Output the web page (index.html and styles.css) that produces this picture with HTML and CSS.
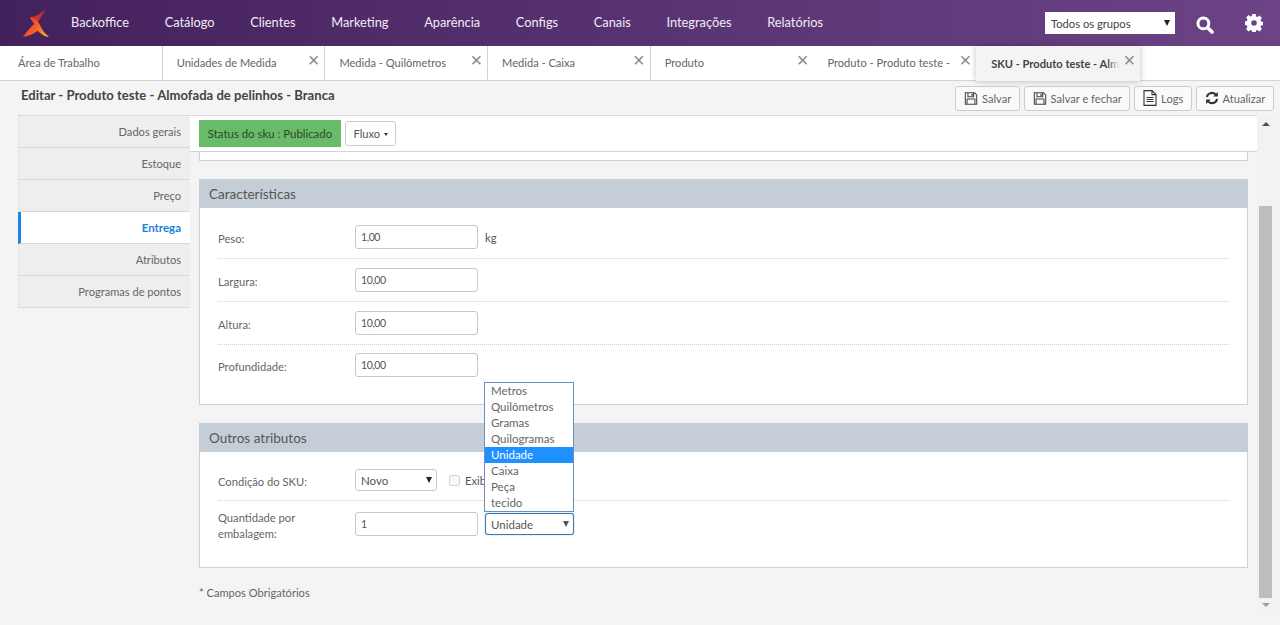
FILE: index.html
```html
<!DOCTYPE html>
<html lang="pt-BR">
<head>
  <meta charset="UTF-8">
  <meta name="viewport" content="width=device-width, initial-scale=1.0">
  <title>Editar SKU</title>
  <link rel="stylesheet" href="styles.css">
</head>
<body>
  <header class="topbar">
    <svg class="logo" width="36" height="34" viewBox="0 0 36 34">
      <defs>
        <linearGradient id="logoGrad" x1="0" y1="0.5" x2="1" y2="1">
          <stop offset="0" stop-color="#ee3a24"/>
          <stop offset="0.55" stop-color="#f7702a"/>
          <stop offset="1" stop-color="#f8c23c"/>
        </linearGradient>
        <linearGradient id="logoTop" x1="0" y1="1" x2="1" y2="0">
          <stop offset="0" stop-color="#e8342a"/>
          <stop offset="1" stop-color="#b8263a"/>
        </linearGradient>
      </defs>
      <path d="M28 2 C25 8 22 13 19 17 L14 15 L12 11.300 C18 11 24 7 28 2 Z" fill="url(#logoTop)"/>
      <path d="M12 11.300 C17 13 20 15 22 19 C24 24 27 28 31 30.700 C27 31 23 28 19.700 24.700 C15 28 10 30.500 5 31 C8 26 12 22 16 18 Z" fill="url(#logoGrad)"/>
    </svg>
    <nav class="menu">
      <a>Backoffice</a>
      <a>Catálogo</a>
      <a>Clientes</a>
      <a>Marketing</a>
      <a>Aparência</a>
      <a>Configs</a>
      <a>Canais</a>
      <a>Integrações</a>
      <a>Relatórios</a>
    </nav>
    <div class="group-select">
      <select>
        <option>Todos os grupos</option>
      </select>
    </div>
    <svg class="top-icon search" width="18" height="18" viewBox="0 0 18 18">
      <circle cx="7.400" cy="7.400" r="5.400" fill="none" stroke="#fff" stroke-width="3"/>
      <path d="M11.500 11.500 L16 16" stroke="#fff" stroke-width="3.600" stroke-linecap="round"/>
    </svg>
    <svg class="top-icon gear" width="18" height="18" viewBox="0 0 18 18">
      <path fill="#fff" fill-rule="evenodd" d="M7.300 0h3.400l.4 2.400 1.400.6 2-1.400 2.400 2.400-1.400 2 .6 1.400 2.400.4v3.400l-2.400.4-.6 1.400 1.400 2-2.400 2.400-2-1.400-1.400.6-.4 2.400H7.300l-.4-2.400-1.400-.6-2 1.400-2.400-2.400 1.400-2-.6-1.400L-.5 10.700V7.300l2.400-.4.6-1.400-1.400-2L3.500 1.100l2 1.400 1.400-.6zM9 6.200a2.800 2.800 0 1 0 0 5.600 2.800 2.800 0 0 0 0-5.600z"/>
    </svg>
  </header>

  <div class="tabs">
    <div class="tab tab-first"><span class="tab-text">Área de Trabalho</span></div>
    <div class="tab"><span class="tab-text">Unidades de Medida</span><span class="tab-close">×</span></div>
    <div class="tab"><span class="tab-text">Medida - Quilômetros</span><span class="tab-close">×</span></div>
    <div class="tab"><span class="tab-text">Medida - Caixa</span><span class="tab-close">×</span></div>
    <div class="tab tab-plain"><span class="tab-text">Produto</span><span class="tab-close">×</span></div>
    <div class="tab tab-plain"><span class="tab-text">Produto - Produto teste -</span><span class="tab-close">×</span></div>
    <div class="tab tab-active"><span class="tab-text">SKU - Produto teste - Alm</span><span class="tab-close">×</span></div>
  </div>

  <div class="title-row">
    <h1>Editar - Produto teste - Almofada de pelinhos - Branca</h1>
    <div class="actions">
      <button class="btn">
        <svg width="14" height="15" viewBox="0 0 16 16"><path fill="none" stroke="#444" stroke-width="1.200" d="M1.500 1.500h10.500l2.500 2.500v10.500h-13z M4.500 1.500v4.500h6.500v-4.500 M3.500 14.500v-6h9v6"/><path fill="#444" d="M8.500 2.500h1.500v2.500h-1.500z"/></svg>
        Salvar
      </button>
      <button class="btn">
        <svg width="14" height="15" viewBox="0 0 16 16"><path fill="none" stroke="#444" stroke-width="1.200" d="M1.500 1.500h10.500l2.500 2.500v10.500h-13z M4.500 1.500v4.500h6.500v-4.500 M3.500 14.500v-6h9v6"/><path fill="#444" d="M8.500 2.500h1.500v2.500h-1.500z"/></svg>
        Salvar e fechar
      </button>
      <button class="btn">
        <svg width="14" height="16" viewBox="0 0 14 16"><path fill="none" stroke="#333" stroke-width="1.100" d="M1 .6h8l4 4v10.800h-12z M9 .6v4h4"/><path stroke="#333" stroke-width="1.100" d="M3.500 7.500h7M3.500 9.500h7M3.500 11.500h7"/></svg>
        Logs
      </button>
      <button class="btn">
        <svg width="14" height="14" viewBox="0 0 15 15"><path fill="none" stroke="#333" stroke-width="2.200" d="M2 6.500A5.600 5.600 0 0 1 12 4.300M13 8.500A5.600 5.600 0 0 1 3 10.700"/><path fill="#333" d="M13.800 1v5h-5zM1.200 14v-5h5z"/></svg>
        Atualizar
      </button>
    </div>
  </div>

  <div class="workspace">
    <aside class="side">
      <a class="side-item">Dados gerais</a>
      <a class="side-item">Estoque</a>
      <a class="side-item">Preço</a>
      <a class="side-item side-active">Entrega</a>
      <a class="side-item">Atributos</a>
      <a class="side-item">Programas de pontos</a>
    </aside>

    <main class="content">
      <div class="status-bar">
        <span class="status">Status do sku : Publicado</span>
        <button class="flow">Fluxo <i class="caret"></i></button>
      </div>

      <div class="scroll-body">
        <div class="stub"></div>

        <section class="panel">
          <h2>Características</h2>
          <div class="panel-body">
            <div class="row">
              <label>Peso:</label>
              <input class="field" value="1,00">
              <span class="unit">kg</span>
            </div>
            <div class="row">
              <label>Largura:</label>
              <input class="field" value="10,00">
            </div>
            <div class="row">
              <label>Altura:</label>
              <input class="field" value="10,00">
            </div>
            <div class="row row-last">
              <label>Profundidade:</label>
              <input class="field" value="10,00">
            </div>
          </div>
        </section>

        <section class="panel panel-other">
          <h2>Outros atributos</h2>
          <div class="panel-body">
            <div class="row row-cond">
              <label>Condição do SKU:</label>
              <div class="select-wrap select-novo">
                <select><option>Novo</option></select>
              </div>
              <input class="check" type="checkbox" disabled>
              <span class="check-label">Exib</span>
            </div>
            <div class="row row-last row-qty">
              <label>Quantidade por<br>embalagem:</label>
              <input class="field" value="1">
              <div class="select-wrap select-unit">
                <select><option>Unidade</option></select>
                <ul class="listbox">
                  <li>Metros</li>
                  <li>Quilômetros</li>
                  <li>Gramas</li>
                  <li>Quilogramas</li>
                  <li class="selected">Unidade</li>
                  <li>Caixa</li>
                  <li>Peça</li>
                  <li>tecido</li>
                </ul>
              </div>
            </div>
          </div>
        </section>

        <p class="note">* Campos Obrigatórios</p>
      </div>
    </main>

    <div class="scrollbar">
      <i class="arrow-up"></i>
      <div class="thumb"></div>
      <i class="arrow-down"></i>
    </div>
  </div>
</body>
</html>
```

FILE: styles.css
```css
* {
  box-sizing: border-box;
}

html, body {
  height: 625px;
  overflow: hidden;
}

body {
  margin: 0;
  background-color: #f4f4f4;
  color: #555;
  font-family: "Lato", "Open Sans", sans-serif;
  font-size: 12px;
}

/* top bar */
.topbar {
  display: flex;
  align-items: center;
  height: 46px;
  padding-left: 18px;
  background: linear-gradient(to right, #43215c, #6c4486);
}

.logo {
  flex: none;
}

.menu {
  display: flex;
  flex: 1;
  gap: 35.7px;
  margin: 0 0 2px 17px;
}

.menu a {
  color: #f1ecf5;
  font-size: 12.8px;
}

.group-select {
  position: relative;
  width: 130px;
  height: 22px;
  margin-right: 21px;
  background-color: #fff;
}

.group-select select {
  width: 100%;
  height: 22px;
  padding-left: 6px;
  border: 0;
  background: transparent;
  color: #444;
  font-family: inherit;
  font-size: 11.2px;
  appearance: none;
}

.group-select::after,
.select-wrap::after {
  content: "";
  position: absolute;
  top: 8px;
  right: 5px;
  border-left: 3.5px solid transparent;
  border-right: 3.5px solid transparent;
  border-top: 6px solid #222;
  pointer-events: none;
}

.top-icon {
  flex: none;
}

.search {
  margin: 3px 31px 0 0;
}

.gear {
  margin: 0 17px 1px 0;
}

/* tabs */
.tabs {
  display: flex;
  height: 35px;
  background-color: #fff;
  border-bottom: 1px solid #d4d4d4;
}

.tab {
  position: relative;
  display: flex;
  align-items: center;
  flex: none;
  width: 162.7px;
  height: 34px;
  padding: 0 26px 2px 14px;
  border-right: 1px solid #d4d4d4;
  color: #666;
  font-size: 11.1px;
}

.tab-first {
  padding-left: 18px;
}

.tab-plain {
  border-right: 0;
}

.tab-text {
  position: relative;
  white-space: nowrap;
}

.tab-active .tab-text::after {
  content: "";
  position: absolute;
  top: 0;
  right: 0;
  bottom: 0;
  width: 12px;
  background: linear-gradient(to right, rgba(244, 244, 244, 0), #f4f4f4);
}

.tab-close {
  position: absolute;
  top: 4px;
  right: 5px;
  color: #8a8a8a;
  font-family: "Liberation Sans", sans-serif;
  font-size: 20px;
  font-weight: 400;
  line-height: 20px;
}

.tab-active {
  width: 164px;
  height: 35px;
  padding: 0 16px 0 15px;
  border-right: 0;
  background-color: #f4f4f4;
  box-shadow: 0 0 6px rgba(0, 0, 0, 0.25);
  color: #444;
  font-weight: 700;
}

/* title row */
.title-row {
  display: flex;
  align-items: center;
  justify-content: space-between;
  height: 34px;
  padding: 0 6px 0 21px;
}

h1 {
  margin: 0 0 7px;
  color: #444;
  font-size: 13.1px;
  font-weight: 700;
}

.actions {
  display: flex;
  gap: 4px;
}

.btn {
  display: flex;
  align-items: center;
  gap: 4px;
  height: 25px;
  padding: 0 7.7px;
  border: 1px solid #ccc;
  border-radius: 3px;
  background-color: #fafafa;
  color: #666;
  font-family: inherit;
  font-size: 11.1px;
}

/* workspace */
.workspace {
  display: flex;
  height: 510px;
  padding-left: 18px;
}

.side {
  flex: none;
  width: 172px;
  border-top: 1px solid #d8d8d8;
}

.side-item {
  display: block;
  height: 32px;
  padding-right: 9px;
  border-bottom: 1px solid #d8d8d8;
  border-left: 1px solid #e2e2e2;
  background-color: #eeeeee;
  color: #666;
  font-size: 11.1px;
  line-height: 31px;
  text-align: right;
}

.side-active {
  border-left: 3px solid #1a86e8;
  background-color: #fff;
  color: #1a7fe0;
  font-size: 11.5px;
  font-weight: 700;
}

.content {
  flex: none;
  width: 1067px;
  overflow: hidden;
}

.status-bar {
  display: flex;
  align-items: center;
  gap: 4px;
  height: 37px;
  padding-left: 9px;
  border-top: 1px solid #d8d8d8;
  border-bottom: 1px solid #d4d4d4;
  background-color: #fff;
}

.status {
  width: 142px;
  height: 27px;
  background-color: #69bb69;
  color: #2b4a2b;
  font-size: 11.4px;
  line-height: 27px;
  text-align: center;
}

.flow {
  height: 25px;
  padding: 0 7.5px;
  border: 1px solid #ccc;
  border-radius: 3px;
  background-color: #fff;
  color: #555;
  font-family: inherit;
  font-size: 11.1px;
}

.caret {
  display: inline-block;
  margin-left: 1px;
  vertical-align: 2px;
  border-left: 2px solid transparent;
  border-right: 2px solid transparent;
  border-top: 3px solid #333;
}

.scroll-body {
  padding: 0 9px;
}

.stub {
  height: 9px;
  border: 1px solid #d0d0d0;
  border-top: 0;
  background-color: #fff;
}

.panel {
  margin-top: 18px;
}

h2 {
  margin: 0;
  height: 29px;
  padding-left: 10px;
  background-color: #c5ced6;
  color: #555;
  font-size: 13.5px;
  font-weight: 400;
  line-height: 31px;
}

.panel-body {
  padding: 8px 18px 19px;
  border: 1px solid #d0d0d0;
  border-top: 0;
  background-color: #fff;
}

.row {
  display: flex;
  align-items: center;
  height: 43px;
  border-bottom: 1px dotted #cfcfcf;
}

.row label {
  flex: none;
  width: 137px;
  padding-top: 4px;
  color: #666;
  font-size: 11.2px;
  line-height: 16px;
}

.row-last {
  height: 40px;
  border-bottom: 0;
}

.field {
  width: 123px;
  height: 24px;
  padding: 0 5px;
  border: 1px solid #c8c8c8;
  border-radius: 3px;
  background-color: #fff;
  color: #555;
  font-family: inherit;
  font-size: 10.5px;
  letter-spacing: -0.4px;
}

.unit {
  margin-left: 7px;
  font-size: 11.2px;
}

.panel-other .panel-body {
  padding-bottom: 20px;
}

.row-cond {
  height: 41px;
}

.row-qty {
  height: 46px;
}

.select-wrap {
  position: relative;
  height: 22px;
}

.select-wrap select {
  display: block;
  width: 100%;
  height: 100%;
  padding-left: 5px;
  border: 1px solid #c8c8c8;
  border-radius: 3px;
  background-color: #fff;
  color: #555;
  font-family: inherit;
  font-size: 11.5px;
  appearance: none;
}

.select-novo {
  width: 82px;
}

.check {
  width: 11px;
  height: 11px;
  margin: 0 5px 0 12px;
}

.check-label {
  font-size: 11.2px;
}

.select-unit {
  width: 89px;
  margin-left: 7px;
}

.select-unit::after {
  border-top-color: #555;
}

.select-unit select {
  border-color: #3a77b0;
  box-shadow: 0 0 1px #3a77b0;
}

.listbox {
  position: absolute;
  left: -1px;
  bottom: 23px;
  width: 90px;
  margin: 0;
  padding: 0;
  border: 1px solid #6c8fba;
  background-color: #fff;
  list-style: none;
}

.listbox li {
  height: 16px;
  padding-left: 6px;
  color: #666;
  font-size: 11.5px;
  line-height: 16px;
}

.listbox .selected {
  background-color: #1e90ff;
  color: #fff;
}

.note {
  margin: 18px 0 0;
  color: #666;
  font-size: 11.1px;
}

/* scrollbar */
.scrollbar {
  position: relative;
  flex: none;
  width: 17px;
  height: 500px;
  background-color: #f2f2f2;
}

.arrow-up,
.arrow-down {
  position: absolute;
  left: 5px;
  border-left: 4px solid transparent;
  border-right: 4px solid transparent;
}

.arrow-up {
  top: 7px;
  border-bottom: 4px solid #505050;
}

.arrow-down {
  top: 488px;
  border-top: 4px solid #a0a0a0;
}

.thumb {
  position: absolute;
  top: 91px;
  left: 2px;
  width: 13px;
  height: 392px;
  background-color: #bdbdbd;
}
```
